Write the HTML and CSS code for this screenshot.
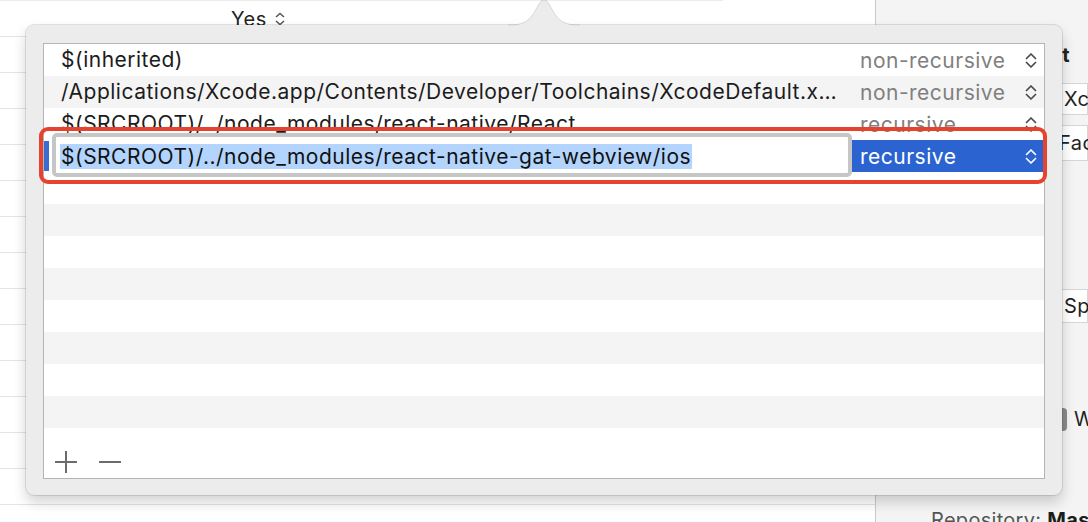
FILE: index.html
```html
<!DOCTYPE html>
<html>
<head>
<meta charset="utf-8">
<link rel="stylesheet" href="styles.css">
</head>
<body>
<div class="screen">
  <div class="settings">
    <div class="topstrip"></div>
    <div class="srow"><span class="yes">Yes <svg class="mini-chev" viewBox="0 0 12 14" width="12" height="14"><path d="M2 5 L6 1.5 L10 5 M2 9 L6 12.5 L10 9"/></svg></span></div>
    <div class="srow"></div>
    <div class="srow"></div>
    <div class="srow"></div>
    <div class="srow"></div>
    <div class="srow"></div>
    <div class="srow"></div>
    <div class="srow"></div>
    <div class="srow"></div>
    <div class="srow"></div>
    <div class="srow"></div>
    <div class="srow"></div>
    <div class="srow"></div>
    <div class="srow"></div>
    <div class="srow"></div>
  </div>
  <div class="inspector">
    <div class="insp-head"><span>Project Document</span></div>
    <div class="insp-field f-format">Xcode 3.2-compatible</div>
    <div class="insp-field f-org">Facebook</div>
    <div class="insp-sep"></div>
    <div class="insp-field f-indent">Spaces</div>
    <div class="insp-sep2"></div>
    <div class="insp-check"><span class="box"></span><span>Wrap lines</span></div>
    <div class="insp-sep3"></div>
    <div class="insp-repo"><span class="lbl">Repository:</span> <b>Master</b></div>
  </div>
</div>

<div class="popover">
  <svg class="arrow" viewBox="0 0 72 27" width="72" height="27">
    <path class="arrow-fill" d="M0 27 L0 26 C14 26 20 24 27 12 L32 3.5 Q36 -1.5 40 3.5 L45 12 C52 24 58 26 72 26 L72 27 Z"/>
    <path class="arrow-line" d="M0 26 C14 26 20 24 27 12 L32 3.5 Q36 -1.5 40 3.5 L45 12 C52 24 58 26 72 26"/>
  </svg>
  <div class="table">
    <div class="row">
      <div class="path">$(inherited)</div>
      <div class="mode"><span>non-recursive</span><svg class="chev" viewBox="0 0 12 17" width="12" height="17"><path d="M1.5 6.5 L6 2 L10.5 6.5 M1.5 10.5 L6 15 L10.5 10.5"/></svg></div>
    </div>
    <div class="row">
      <div class="path">/Applications/Xcode.app/Contents/Developer/Toolchains/XcodeDefault.x…</div>
      <div class="mode"><span>non-recursive</span><svg class="chev" viewBox="0 0 12 17" width="12" height="17"><path d="M1.5 6.5 L6 2 L10.5 6.5 M1.5 10.5 L6 15 L10.5 10.5"/></svg></div>
    </div>
    <div class="row">
      <div class="path">$(SRCROOT)/../node_modules/react-native/React</div>
      <div class="mode"><span>recursive</span><svg class="chev" viewBox="0 0 12 17" width="12" height="17"><path d="M1.5 6.5 L6 2 L10.5 6.5 M1.5 10.5 L6 15 L10.5 10.5"/></svg></div>
    </div>
    <div class="row editing">
      <div class="path">
        <span class="marker"></span>
        <div class="field"><span class="sel">$(SRCROOT)/../node_modules/react-native-gat-webview/ios</span></div>
      </div>
      <div class="mode active"><span>recursive</span><svg class="chev" viewBox="0 0 12 17" width="12" height="17"><path d="M1.5 6.5 L6 2 L10.5 6.5 M1.5 10.5 L6 15 L10.5 10.5"/></svg></div>
    </div>
    <div class="row"></div>
    <div class="row"></div>
    <div class="row"></div>
    <div class="row"></div>
    <div class="row"></div>
    <div class="row"></div>
    <div class="row"></div>
    <div class="row"></div>
    <div class="footer">
      <svg class="btn" viewBox="0 0 22 22" width="22" height="22"><path d="M0 11 H22 M11 0 V22"/></svg>
      <svg class="btn" viewBox="0 0 22 22" width="22" height="22"><path d="M0 11 H22"/></svg>
    </div>
  </div>
</div>

<div class="annot"></div>
</body>
</html>
```

FILE: styles.css
```css
* { box-sizing: border-box; }

html, body {
  margin: 0;
  padding: 0;
}

body {
  width: 1088px;
  height: 522px;
  overflow: hidden;
  position: relative;
  background: #ffffff;
  font-family: Inter, "Liberation Sans", Arial, sans-serif;
  color: #1c1c1c;
  letter-spacing: 0.5px;
}

.screen {
  display: flex;
  height: 522px;
}

/* background settings list */
.settings {
  width: 875px;
  flex: none;
  background: #fff;
}

.topstrip {
  width: 723px;
  height: 1px;
  background: #ececec;
}

.srow {
  height: 36px;
  border-bottom: 1px solid #e4e4e4;
  position: relative;
}

.yes {
  position: absolute;
  left: 231px;
  top: 6px;
  font-size: 20px;
  color: #222;
  display: flex;
  align-items: center;
  gap: 7px;
}

.mini-chev path {
  fill: none;
  stroke: #555;
  stroke-width: 1.5;
}

/* inspector on right */
.inspector {
  flex: 1;
  border-left: 1px solid #c9c9c9;
  background: #f4f4f4;
  display: flex;
  flex-direction: column;
  overflow: hidden;
}

.insp-head {
  margin-top: 44px;
  width: 194px;
  height: 22px;
  display: flex;
  justify-content: flex-end;
  white-space: nowrap;
  font-weight: 700;
  font-size: 20px;
  line-height: 22px;
  color: #222;
}

.insp-field {
  margin-left: 170px;
  background: #fff;
  border: 1px solid #d6d6d6;
  font-size: 20px;
  white-space: nowrap;
  padding-left: 17px;
  color: #222;
}

.f-format {
  margin-top: 17px;
  height: 32px;
  line-height: 30px;
}

.f-org {
  margin-top: 10px;
  height: 36px;
  line-height: 34px;
  padding-left: 12px;
}

.insp-sep {
  margin-top: 80px;
  height: 1px;
  background: #d3d3d3;
}

.f-indent {
  margin-top: 48px;
  height: 34px;
  line-height: 32px;
  padding-left: 17px;
}

.insp-sep2 {
  margin-top: 12px;
  height: 1px;
  background: #d3d3d3;
}

.insp-check {
  margin-top: 72px;
  margin-left: 171px;
  display: flex;
  align-items: center;
  gap: 7px;
  font-size: 20px;
  white-space: nowrap;
  color: #222;
}

.insp-check .box {
  width: 20px;
  height: 23px;
  border-radius: 4px;
  background: #8a8a8a;
  flex: none;
}

.insp-sep3 {
  margin-top: 30px;
  height: 1px;
  background: #d3d3d3;
}

.insp-repo {
  margin-top: 47px;
  margin-left: 55px;
  font-size: 20px;
  white-space: nowrap;
  letter-spacing: 0.3px;
}

.insp-repo .lbl {
  color: #555;
}

/* popover */
.popover {
  position: absolute;
  left: 26px;
  top: 25px;
  width: 1036px;
  height: 470px;
  background: #ececec;
  border-radius: 8px;
  box-shadow: 0 0 0 1px rgba(0, 0, 0, 0.10), 0 7px 14px rgba(0, 0, 0, 0.18);
  padding: 18px 17px 16px 17px;
}

.arrow {
  position: absolute;
  left: 482px;
  top: -26px;
  overflow: visible;
}

.arrow-fill {
  fill: #ececec;
}

.arrow-line {
  fill: none;
  stroke: rgba(0, 0, 0, 0.12);
  stroke-width: 1;
}

.table {
  height: 436px;
  border: 1px solid #b4b4b4;
  background: #fff;
  display: flex;
  flex-direction: column;
}

.row {
  height: 32px;
  flex: none;
  display: flex;
  background: #fff;
}

.row:nth-child(even) {
  background: #f4f4f4;
}

.path {
  width: 808px;
  flex: none;
  padding-left: 17px;
  font-size: 21px;
  line-height: 32px;
  white-space: nowrap;
  overflow: hidden;
  color: #1c1c1c;
}

.mode {
  flex: 1;
  display: flex;
  align-items: center;
  justify-content: space-between;
  padding-left: 8px;
  padding-right: 7px;
  font-size: 21px;
  color: #808080;
  white-space: nowrap;
}

.chev path {
  fill: none;
  stroke: #4a4a4a;
  stroke-width: 1.7;
  stroke-linecap: round;
  stroke-linejoin: round;
}

.row.editing {
  background: #fff;
  position: relative;
  z-index: 2;
}

.editing .path {
  display: flex;
  padding-left: 0;
  overflow: visible;
}

.marker {
  width: 5px;
  height: 30px;
  margin-top: 1px;
  background: #3b6cd0;
  flex: none;
}

.field {
  flex: 1;
  margin: -7px 0 -5px 3px;
  height: 44px;
  border: 4px solid #c6c6c6;
  border-radius: 5px;
  background: #fff;
  display: flex;
  align-items: center;
  padding-left: 4px;
}

.sel {
  background: #b3d5fd;
  height: 25px;
  line-height: 25px;
  padding: 0 1px;
  margin-top: 3px;
  color: #111;
}

.mode.active {
  background: #2b64d1;
  color: #fff;
}

.mode.active .chev path {
  stroke: #fff;
}

.footer {
  flex: 1;
  display: flex;
  align-items: flex-end;
  gap: 22px;
  padding: 0 0 5px 11px;
}

.btn path {
  fill: none;
  stroke: #6c6c6c;
  stroke-width: 2;
}

/* annotation rectangle drawn over the screenshot */
.annot {
  position: absolute;
  left: 39px;
  top: 127px;
  width: 1008px;
  height: 57px;
  border: 4px solid #e6432e;
  border-radius: 9px;
  z-index: 5;
}
```
